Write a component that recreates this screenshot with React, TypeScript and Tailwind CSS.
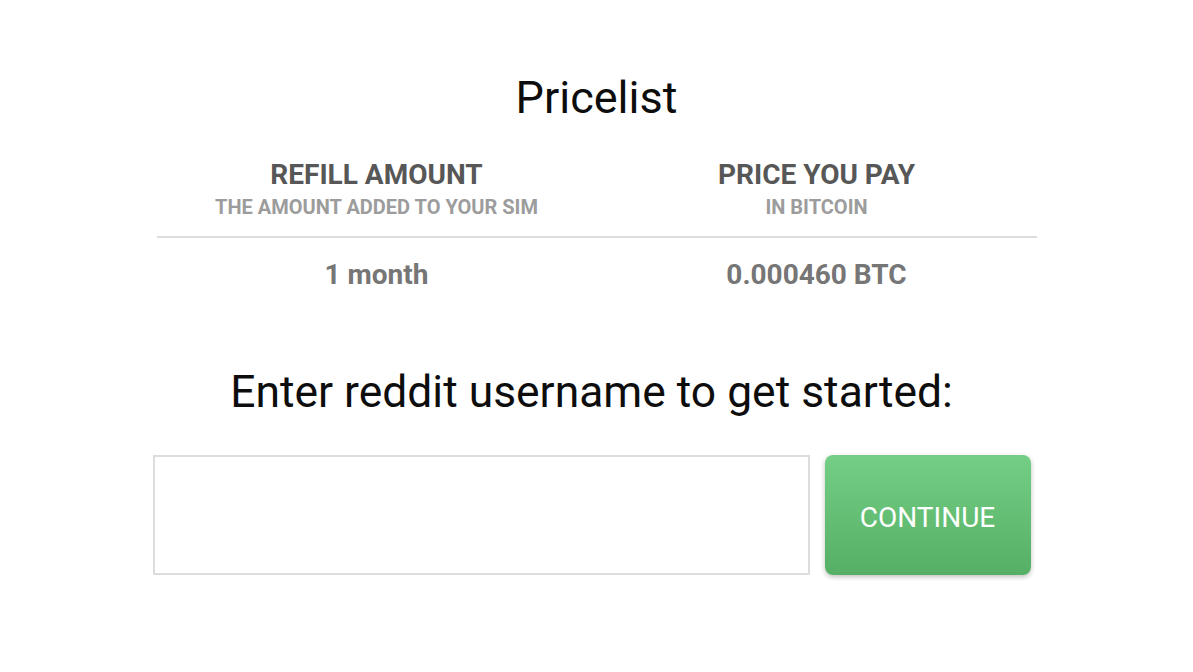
import React from "react";

export default function App() {
  return (
    <div
      className="min-h-screen w-full bg-white"
      style={{ fontFamily: "Roboto, 'Noto Sans', sans-serif" }}
    >
      <div className="pt-[75px]">
        <h1 className="text-center text-[45px] leading-[45px] font-normal text-[#0d0d0d]">
          Pricelist
        </h1>
        <div className="mx-auto mt-[41px] w-[880px]">
          <div className="grid grid-cols-2 border-b-2 border-[#dddddd] pb-[19px]">
            <div className="flex flex-col items-center">
              <div className="text-[28px] leading-[28px] font-bold text-[#575757]">
                REFILL AMOUNT
              </div>
              <div className="mt-[8px] text-[20px] leading-[20px] font-bold text-[#9c9c9c]">
                THE AMOUNT ADDED TO YOUR SIM
              </div>
            </div>
            <div className="flex flex-col items-center">
              <div className="text-[28px] leading-[28px] font-bold text-[#575757]">
                PRICE YOU PAY
              </div>
              <div className="mt-[8px] text-[20px] leading-[20px] font-bold text-[#9c9c9c]">
                IN BITCOIN
              </div>
            </div>
          </div>
          <div className="grid grid-cols-2 pt-[23px]">
            <div className="text-center text-[28px] leading-[28px] font-bold text-[#767676]">
              1 month
            </div>
            <div className="text-center text-[28px] leading-[28px] font-bold text-[#767676]">
              0.000460 BTC
            </div>
          </div>
        </div>
        <div className="mx-auto mt-[81px] w-[888px] pr-[10px]">
          <h2 className="text-center text-[44.4px] leading-[45px] font-normal text-[#0d0d0d]">
            Enter reddit username to get started:
          </h2>
          <div className="mt-[40px] flex gap-[15px]">
            <input
              type="text"
              className="h-[120px] w-[657px] border-2 border-[#dddddd] bg-white px-4 text-[28px] outline-none"
            />
            <button className="h-[120px] w-[206px] rounded-lg bg-gradient-to-b from-[#74cf86] to-[#55b065] pt-[6px] text-[28px] font-normal text-white shadow-[0_2px_5px_rgba(0,0,0,0.25)]">
              CONTINUE
            </button>
          </div>
        </div>
      </div>
    </div>
  );
}
